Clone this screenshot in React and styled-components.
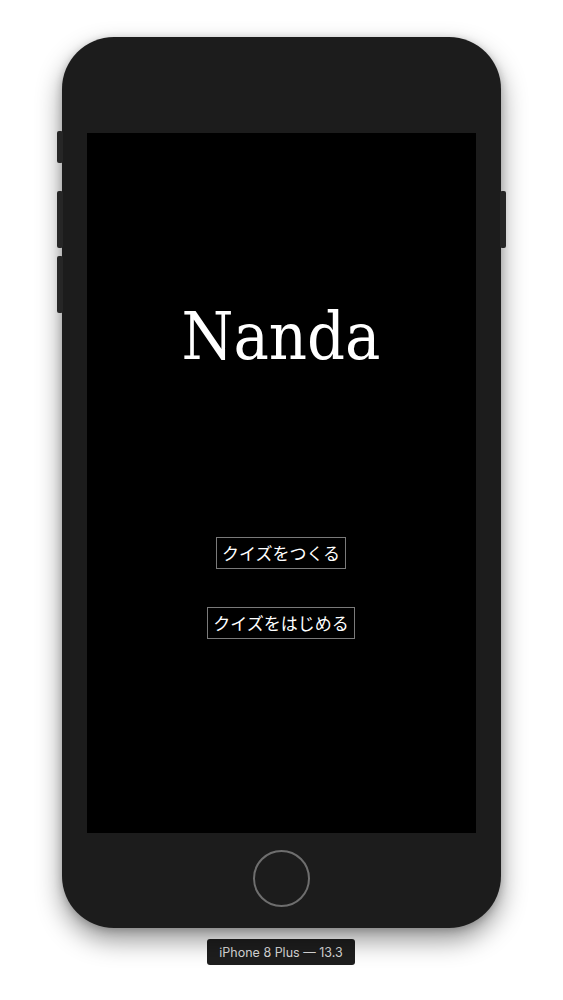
import React from 'react';
import styled, { createGlobalStyle } from 'styled-components';

const GlobalStyle = createGlobalStyle`
  html, body {
    margin: 0;
    padding: 0;
    background: #ffffff;
  }
`;

const Page = styled.div`
  width: 563px;
  height: 1000px;
  display: flex;
  flex-direction: column;
  align-items: center;
  padding-top: 37px;
  box-sizing: border-box;
  overflow: hidden;
`;

const PhoneBody = styled.div`
  position: relative;
  width: 439px;
  height: 891px;
  margin-left: -1px;
  box-sizing: border-box;
  padding: 96px 25px 0;
  border-radius: 52px;
  background: #1c1c1c;
  box-shadow: 0 12px 26px rgba(0, 0, 0, 0.42), 0 2px 8px rgba(0, 0, 0, 0.2);
  display: flex;
  flex-direction: column;
  align-items: center;
`;

const SideKey = styled.div`
  position: absolute;
  width: 6px;
  top: ${(p) => p.top}px;
  height: ${(p) => p.h}px;
  ${(p) => (p.right ? 'right: -5px;' : 'left: -5px;')}
  background: #262626;
  border-radius: 2px;
`;

const Screen = styled.div`
  width: 389px;
  height: 700px;
  background: #000000;
  display: flex;
  flex-direction: column;
  align-items: center;
`;

const Title = styled.h1`
  margin: 168px 0 0;
  font-family: 'DejaVu Serif Condensed', 'Liberation Serif', serif;
  font-stretch: condensed;
  font-weight: 400;
  font-size: 66px;
  line-height: 72px;
  color: #ffffff;
`;

const ButtonList = styled.div`
  margin-top: 164px;
  display: flex;
  flex-direction: column;
  align-items: center;
  gap: 38px;
`;

const QuizButton = styled.button`
  margin: 0;
  padding: 5px 5px;
  background: transparent;
  border: 1px solid #7a7a7a;
  color: #ffffff;
  font-family: 'Noto Sans CJK JP', 'Noto Sans', sans-serif;
  font-size: 17px;
  line-height: 20px;
  cursor: pointer;
`;

const HomeButton = styled.div`
  margin-top: 17px;
  width: 57px;
  height: 57px;
  box-sizing: border-box;
  border-radius: 50%;
  border: 2px solid #6e6e6e;
  margin-left: 1px;
`;

const DeviceLabel = styled.div`
  margin-top: 11px;
  margin-left: -1px;
  height: 26px;
  padding: 0 12px;
  display: flex;
  align-items: center;
  border-radius: 3px;
  background: #1e1e1e;
  color: #dcdcdc;
  font-family: Inter, 'Liberation Sans', sans-serif;
  font-size: 12.5px;
`;

export default function App() {
  return (
    <>
      <GlobalStyle />
      <Page>
        <PhoneBody>
          <SideKey top={94} h={32} />
          <SideKey top={154} h={57} />
          <SideKey top={219} h={57} />
          <SideKey right top={154} h={57} />
          <Screen>
            <Title>Nanda</Title>
            <ButtonList>
              <QuizButton>クイズをつくる</QuizButton>
              <QuizButton>クイズをはじめる</QuizButton>
            </ButtonList>
          </Screen>
          <HomeButton />
        </PhoneBody>
        <DeviceLabel>iPhone 8 Plus — 13.3</DeviceLabel>
      </Page>
    </>
  );
}
